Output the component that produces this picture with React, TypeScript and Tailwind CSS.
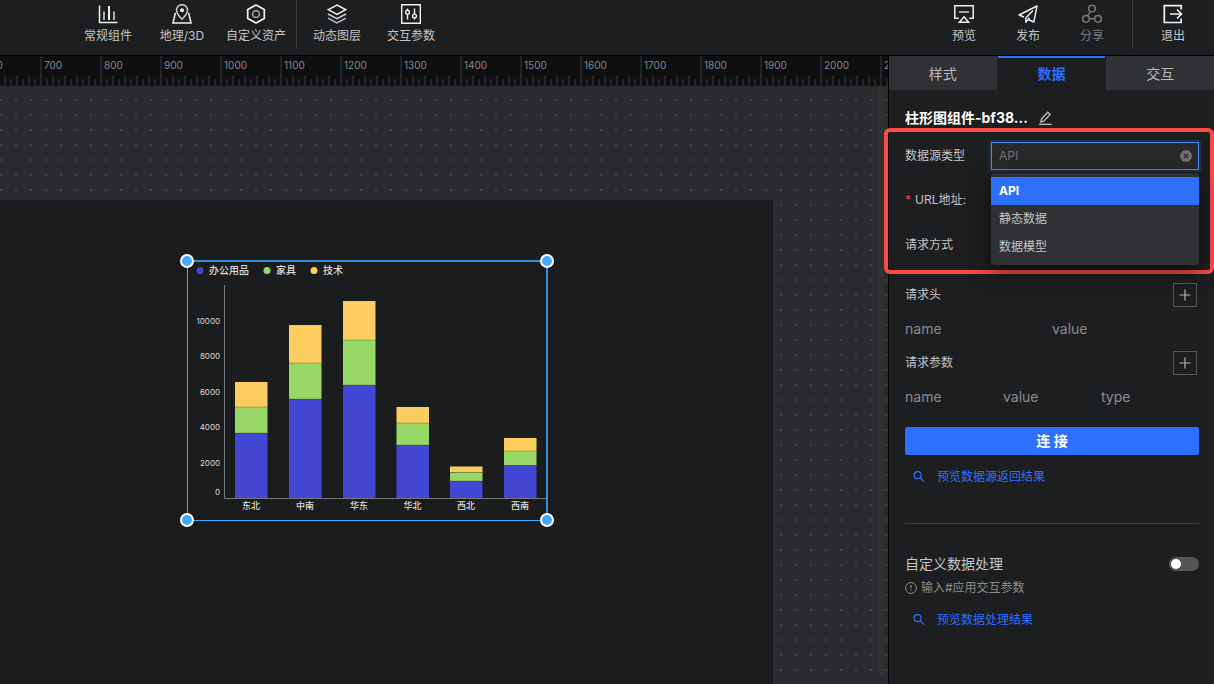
import React, { useState } from 'react';

type IconProps = { className?: string };

type ToolItem = {
  label: string;
  icon: React.FC<IconProps>;
  disabled?: boolean;
};

const ComponentsIcon: React.FC<IconProps> = ({ className }) => (
  <svg className={className} viewBox="0 0 20 20" fill="none" stroke="currentColor" strokeWidth="1.5">
    <path d="M1.500 1.500v17H19.500" />
    <path d="M6 16V7.500" strokeWidth="2" strokeOpacity="0.7" />
    <path d="M11 16V2" strokeWidth="2" />
    <path d="M16 16V7.500" strokeWidth="2" strokeOpacity="0.7" />
  </svg>
);

const MapIcon: React.FC<IconProps> = ({ className }) => (
  <svg className={className} viewBox="0 0 20 20" fill="none" stroke="currentColor" strokeWidth="1.5">
    <path d="M10 15.200C6.400 11.600 4.500 9 4.500 6.200a5.500 5.500 0 0 1 11 0c0 2.800-1.900 5.400-5.500 9z" strokeOpacity="0.85" />
    <circle cx="10" cy="6.200" r="2" fill="currentColor" stroke="none" />
    <path d="M4 9.500H3.200L1 19h18l-2.200-9.500H16" />
  </svg>
);

const AssetIcon: React.FC<IconProps> = ({ className }) => (
  <svg className={className} viewBox="0 0 20 20" fill="none" stroke="currentColor" strokeWidth="1.7">
    <path d="M10 1l8.300 4.600v8.800L10 19l-8.300-4.600V5.600z" />
    <circle cx="10" cy="10" r="3.400" strokeOpacity="0.6" />
  </svg>
);

const LayersIcon: React.FC<IconProps> = ({ className }) => (
  <svg className={className} viewBox="0 0 20 20" fill="none" stroke="currentColor" strokeWidth="1.500">
    <path d="M10 1l8.700 4.700-8.700 4.700-8.700-4.700z" />
    <path d="M1 10l9 4.700L19 10" strokeOpacity="0.85" />
    <path d="M1 14.200l9 4.700 9-4.700" strokeOpacity="0.75" />
  </svg>
);

const ParamsIcon: React.FC<IconProps> = ({ className }) => (
  <svg className={className} viewBox="0 0 20 20" fill="none" stroke="currentColor" strokeWidth="1.400">
    <path d="M.7.7h18.600v18.600H.7z" />
    <path d="M6.500 4.500v2M6.500 10v5.500M13.500 4.500v5.500M13.500 14v1.500" />
    <circle cx="6.500" cy="8.200" r="1.900" />
    <circle cx="13.500" cy="12" r="1.900" />
  </svg>
);

const PreviewIcon: React.FC<IconProps> = ({ className }) => (
  <svg className={className} viewBox="0 0 20 20" fill="none" stroke="currentColor" strokeWidth="1.500">
    <path d="M4.800 14.300H.8V1.800h18.400v12.500h-4" />
    <path d="M5 8h10" strokeWidth="1.300" />
    <path d="M10 12.800l4.600 5.500H5.400z" />
  </svg>
);

const PublishIcon: React.FC<IconProps> = ({ className }) => (
  <svg className={className} viewBox="0 0 20 20" fill="none" stroke="currentColor" strokeWidth="1.400" strokeLinejoin="round">
    <path d="M6 13L1 11 19 2l-3.200 16-5.500-2.500" />
    <path d="M15 6.500L7.800 14v4.300l3.700-4.500" />
  </svg>
);

const ShareIcon: React.FC<IconProps> = ({ className }) => (
  <svg className={className} viewBox="0 0 20 20" fill="none" stroke="currentColor" strokeWidth="1.500">
    <circle cx="10" cy="4.500" r="3.300" />
    <circle cx="4" cy="14.800" r="3.300" />
    <circle cx="16" cy="14.800" r="3.300" />
    <path d="M8.300 7.400L5.700 11.900M7.300 14.800h5.400" />
  </svg>
);

const ExitIcon: React.FC<IconProps> = ({ className }) => (
  <svg className={className} viewBox="0 0 20 20" fill="none" stroke="currentColor" strokeWidth="1.700">
    <path d="M18.200 5.500V1.700H1.300v16.800h16.900v-4" />
    <path d="M7 10h11.300M14 5.500l4.500 4.500-4.500 4.500" />
  </svg>
);

const EditIcon: React.FC<IconProps> = ({ className }) => (
  <svg className={className} viewBox="0 0 14 14" fill="none" stroke="currentColor" strokeWidth="1.300">
    <path d="M1 13.300h12.500" />
    <path d="M2.800 10.800l.7-3L9.800 1.300l2.300 2.300-6.300 6.500z" />
  </svg>
);

const SearchIcon: React.FC<IconProps> = ({ className }) => (
  <svg className={className} viewBox="0 0 12 12" fill="none" stroke="currentColor" strokeWidth="1.200">
    <circle cx="4.600" cy="4.200" r="3.500" />
    <path d="M7 6.600l4 4" />
  </svg>
);

const leftTools: ToolItem[] = [
  { label: '常规组件', icon: ComponentsIcon },
  { label: '地理/3D', icon: MapIcon },
  { label: '自定义资产', icon: AssetIcon },
];

const canvasTools: ToolItem[] = [
  { label: '动态图层', icon: LayersIcon },
  { label: '交互参数', icon: ParamsIcon },
];

const pageTools: ToolItem[] = [
  { label: '预览', icon: PreviewIcon },
  { label: '发布', icon: PublishIcon },
  { label: '分享', icon: ShareIcon, disabled: true },
];

const rulerMarks = [600, 700, 800, 900, 1000, 1100, 1200, 1300, 1400, 1500, 1600, 1700, 1800, 1900, 2000, 2100];
const minorTicks = [1, 2, 3, 4, 5, 6, 7, 8, 9];

const legend = [
  { name: '办公用品', color: '#4346d3', x: 13 },
  { name: '家具', color: '#97d765', x: 80 },
  { name: '技术', color: '#fbcd5f', x: 127 },
];

// top edge of each stacked segment, in chart coordinates
const bars = [
  { name: '东北', x: 48, office: 172, furniture: 146, tech: 121 },
  { name: '中南', x: 102, office: 138, furniture: 102, tech: 64 },
  { name: '华东', x: 156, office: 124, furniture: 79, tech: 40 },
  { name: '华北', x: 209.5, office: 184, furniture: 162, tech: 146 },
  { name: '西北', x: 263, office: 220, furniture: 211.5, tech: 205.5 },
  { name: '西南', x: 317, office: 204.5, furniture: 190, tech: 177 },
];

const yLabels = [
  { text: '10000', y: 60 },
  { text: '8000', y: 95 },
  { text: '6000', y: 131 },
  { text: '4000', y: 166 },
  { text: '2000', y: 202 },
  { text: '0', y: 231 },
];

const sourceTypes = ['API', '静态数据', '数据模型'];
const BASELINE = 237;
const BAR_WIDTH = 32.5;

const ToolButton: React.FC<{ item: ToolItem; wide?: boolean }> = ({ item, wide }) => {
  const Icon = item.icon;
  return (
    <button
      disabled={item.disabled}
      className={`flex shrink-0 flex-col items-center gap-1 pt-1 text-xs leading-4 whitespace-nowrap ${wide ? 'w-[74px]' : 'w-16'} ${item.disabled ? 'text-[#77787a]' : 'text-[#c4c5c6]'}`}
    >
      <Icon className={`h-5 w-5 ${item.disabled ? '' : 'text-[#f0f0f0]'}`} />
      {item.label}
    </button>
  );
};

const Toolbar: React.FC = () => (
  <header className="flex h-14 shrink-0 items-stretch justify-between border-b border-black bg-[#1d1e20] pr-[9px] pl-[71px]">
    <div className="flex">
      {leftTools.map((item) => <ToolButton key={item.label} item={item} wide />)}
      <div className="mx-[3px] mb-1.5 w-px bg-[#3d3e42]" />
      {canvasTools.map((item) => <ToolButton key={item.label} item={item} wide />)}
    </div>
    <div className="flex">
      {pageTools.map((item) => <ToolButton key={item.label} item={item} />)}
      <div className="mx-2 mb-1.5 w-px bg-[#3d3e42]" />
      <ToolButton item={{ label: '退出', icon: ExitIcon }} />
    </div>
  </header>
);

const Ruler: React.FC = () => (
  <div className="h-[30px] shrink-0 overflow-hidden bg-[#0f0f10]">
    <div className="-ml-5 flex h-full">
      {rulerMarks.map((mark) => (
        <div key={mark} className="flex h-full w-[60px] shrink-0 flex-col justify-between border-l-2 border-[#232426]">
          <span className="pt-px pl-0.5 text-[10px] leading-4 text-[#85878c]">{mark}</span>
          <div className="flex items-end gap-1 pl-1">
            {minorTicks.map((tick) => (
              <i key={tick} className={`w-0.5 shrink-0 bg-[#232426] ${tick % 2 ? 'h-[7px]' : 'h-2.5'}`} />
            ))}
          </div>
        </div>
      ))}
    </div>
  </div>
);

const Handle: React.FC<{ className: string }> = ({ className }) => (
  <span className={`absolute h-3.5 w-3.5 rounded-full border-2 border-white bg-[#40a9ff] ${className}`} />
);

const ChartWidget: React.FC = () => (
  <div className="absolute top-[60px] left-[187px] h-[261px] w-[361px] border-t-2 border-r-2 border-b border-l border-t-[#3a8fd8] border-r-[#3a8fd8] border-b-[#40a9ff] border-l-[#40a9ff]">
    <svg className="absolute -top-px -left-px h-[258px] w-[360px]" viewBox="0 0 360 258">
      {legend.map((item) => (
        <g key={item.name}>
          <circle cx={item.x} cy="9.500" r="3.500" fill={item.color} />
          <text x={item.x + 9} y="13" fontSize="10" fontWeight="500" fill="#dcdcdc">{item.name}</text>
        </g>
      ))}
      {yLabels.map((label) => (
        <text key={label.text} x="33" y={label.y + 3} textAnchor="end" fontSize="8" fill="#dcdcdc">{label.text}</text>
      ))}
      {bars.map((bar) => (
        <g key={bar.name}>
          <rect x={bar.x} y={bar.tech} width={BAR_WIDTH} height={bar.furniture - bar.tech} fill="#fbcd5f" />
          <rect x={bar.x} y={bar.furniture} width={BAR_WIDTH} height={bar.office - bar.furniture} fill="#97d765" />
          <rect x={bar.x} y={bar.office} width={BAR_WIDTH} height={BASELINE - bar.office} fill="#4346d3" />
          <path d={`M${bar.x} ${bar.furniture}h${BAR_WIDTH}M${bar.x} ${bar.office}h${BAR_WIDTH}`} stroke="#1b1c1e" strokeOpacity="0.25" />
          <text x={bar.x + 16} y="248" textAnchor="middle" fontSize="9" fontWeight="500" fill="#dcdcdc">{bar.name}</text>
        </g>
      ))}
      <path d="M37.500 24V237.500H359" fill="none" stroke="#77787b" />
    </svg>
    <Handle className="-top-2 -left-2" />
    <Handle className="-top-2 -right-2" />
    <Handle className="-bottom-[7px] -left-2" />
    <Handle className="-right-2 -bottom-[7px]" />
  </div>
);

const Workspace: React.FC = () => (
  <main className="flex min-w-0 flex-1 flex-col overflow-hidden">
    <Ruler />
    <div className="relative flex-1 overflow-hidden bg-[#2a2b2f]">
      <svg className="absolute inset-0 h-full w-full">
        <defs>
          <pattern id="dots" width="15" height="15" patternUnits="userSpaceOnUse">
            <rect x="0" y="13" width="2" height="2" fill="#404145" />
          </pattern>
        </defs>
        <rect width="100%" height="100%" fill="url(#dots)" />
      </svg>
      <div className="absolute top-0 right-1 bottom-2 w-1.5 rounded-full bg-[#303031]" />
      <div className="absolute top-[114px] bottom-0 left-0 w-[773px] bg-[#1b1c1e]">
        <ChartWidget />
      </div>
    </div>
  </main>
);

const SourceTypeField: React.FC = () => {
  const [value, setValue] = useState('API');
  const [query, setQuery] = useState('');
  return (
    <div className="relative min-w-0 flex-1">
      <div className="flex h-7 items-center border border-[#4a8bff] bg-[#29292c] pr-1.5 pl-[7px] shadow-[0_0_0_2px_rgba(45,111,255,0.2)]">
        <input
          id="source-type"
          value={query}
          onChange={(e) => setQuery(e.target.value)}
          placeholder={value}
          className="min-w-0 flex-1 bg-transparent text-xs text-[#c4c5c6] outline-none placeholder:text-[#717274]"
        />
        <button aria-label="清除" onClick={() => setQuery('')}>
          <svg className="h-3 w-3" viewBox="0 0 12 12">
            <circle cx="6" cy="6" r="6" fill="#6e6e70" />
            <path d="M4 4l4 4M8 4l-4 4" stroke="#29292c" strokeWidth="1.200" />
          </svg>
        </button>
      </div>
      <ul role="listbox" className="absolute top-[31px] right-0 left-0 z-10 rounded-sm bg-[#303134] py-1 shadow-[0_6px_20px_rgba(0,0,0,0.6)]">
        {sourceTypes.map((type) => (
          <li
            key={type}
            role="option"
            aria-selected={type === value}
            onClick={() => setValue(type)}
            className={`h-7 px-2 text-xs leading-7 ${type === value ? 'bg-[#2d6fff] font-bold text-white' : 'text-[#c4c5c6]'}`}
          >
            {type}
          </li>
        ))}
      </ul>
    </div>
  );
};

const AddButton: React.FC<{ label: string }> = ({ label }) => (
  <button aria-label={label} className="mr-0.5 flex h-6 w-6 items-center justify-center border border-[#55565a] text-[#b4b5b6]">
    <svg className="h-3 w-3" viewBox="0 0 12 12" stroke="currentColor" strokeWidth="1.200">
      <path d="M6 .5v11M.5 6h11" />
    </svg>
  </button>
);

const PreviewLink: React.FC<{ children: React.ReactNode }> = ({ children }) => (
  <a href="#" className="flex h-7 items-center gap-3 pl-2 text-xs text-[#2d6fff]">
    <SearchIcon className="h-3 w-3" />
    {children}
  </a>
);

const SidePanel: React.FC = () => {
  const [custom, setCustom] = useState(false);
  const tabs = ['样式', '数据', '交互'];
  return (
    <aside className="relative z-10 flex w-[326px] shrink-0 flex-col border-l border-black bg-[#1d1e20] text-xs text-[#c4c5c6]">
      <nav className="grid h-[34px] shrink-0 grid-cols-3 gap-px">
        {tabs.map((tab) => (
          <button
            key={tab}
            className={`border-t-2 text-sm ${tab === '数据' ? 'border-[#2d6fff] font-bold text-[#2d6fff]' : 'border-[#303134] bg-[#303134] text-[#b9babb]'}`}
          >
            {tab}
          </button>
        ))}
      </nav>

      <div className="flex flex-col pr-[15px] pl-4">
        <div className="mt-4 flex h-6 items-center gap-2.5 text-sm font-bold text-white">
          柱形图组件-bf38...
          <button aria-label="重命名"><EditIcon className="h-3.5 w-3.5 text-[#c4c5c6]" /></button>
        </div>

        {/* Highlighted group */}
        <section className="-mt-0.5 -mr-[15px] -ml-[21px] flex h-[146px] flex-col rounded-md border-4 border-[#fa4b46] pt-2.5 pr-[11px] pl-[17px]">
          <div className="flex h-7 items-center">
            <label htmlFor="source-type" className="w-[86px] shrink-0">数据源类型</label>
            <SourceTypeField />
          </div>
          <div className="mt-4 flex h-7 items-center gap-1">
            <span className="text-[#e0434d]">*</span>
            URL地址:
          </div>
          <div className="mt-[17px] flex h-7 items-center">请求方式</div>
        </section>

        <div className="mt-[9px] flex h-6 items-center justify-between">
          请求头
          <AddButton label="添加请求头" />
        </div>
        <div className="mt-3 grid h-5 grid-cols-2 items-center text-sm text-[#8b8c8d]">
          <span>name</span>
          <span>value</span>
        </div>
        <div className="mt-3 flex h-6 items-center justify-between">
          请求参数
          <AddButton label="添加请求参数" />
        </div>
        <div className="mt-3 grid h-5 grid-cols-3 items-center text-sm text-[#8b8c8d]">
          <span>name</span>
          <span>value</span>
          <span>type</span>
        </div>

        <button className="mt-5 h-7 rounded-xs bg-[#2d6fff] text-sm font-bold text-white">连 接</button>
        <div className="mt-2">
          <PreviewLink>预览数据源返回结果</PreviewLink>
        </div>

        <hr className="mt-8 border-[#3d3e42]" />

        <div className="mt-7 flex h-6 items-center justify-between">
          <label htmlFor="custom-data" className="text-sm">自定义数据处理</label>
          <input
            id="custom-data"
            type="checkbox"
            role="switch"
            checked={custom}
            onChange={(e) => setCustom(e.target.checked)}
            className="h-3.5 w-[30px] appearance-none rounded-full bg-[#565656] px-0.5 py-0.5 before:block before:h-2.5 before:w-2.5 before:rounded-full before:bg-white checked:bg-[#2d6fff] checked:before:ml-auto"
          />
        </div>
        <div className="mt-0.5 flex h-5 items-center gap-1 text-[#8b8c8d]">
          <svg className="h-3 w-3" viewBox="0 0 12 12" fill="none" stroke="currentColor">
            <circle cx="6" cy="6" r="5.400" />
            <path d="M6 3v3.600M6 7.800v1.200" strokeWidth="1.200" />
          </svg>
          输入#应用交互参数
        </div>
        <div className="mt-2">
          <PreviewLink>预览数据处理结果</PreviewLink>
        </div>
      </div>
    </aside>
  );
};

const App: React.FC = () => (
  <div className="flex h-screen flex-col overflow-hidden bg-[#1d1e20] font-[Inter,'Noto_Sans_CJK_SC',sans-serif]">
    <Toolbar />
    <div className="flex min-h-0 flex-1">
      <Workspace />
      <SidePanel />
    </div>
  </div>
);

export default App;
